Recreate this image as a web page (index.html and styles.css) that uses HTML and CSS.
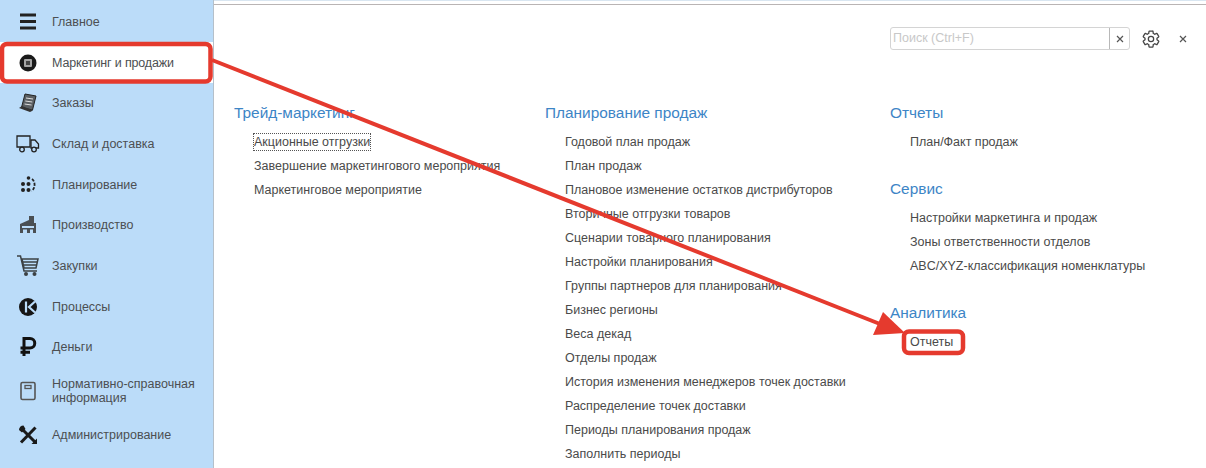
FILE: index.html
```html
<!DOCTYPE html>
<html lang="ru">
<head>
<meta charset="utf-8">
<title>Маркетинг и продажи</title>
<link rel="stylesheet" href="styles.css">
</head>
<body>
<div class="app">
  <nav class="sidebar">
    <div class="nav-item"><svg class="ico" viewBox="0 0 24 24"><path d="M4 3.500h16v3H4zM4 10h16v3H4zM4 16.500h16v3H4z" fill="#222"/></svg><span>Главное</span></div>
    <div class="nav-item active"><svg class="ico" viewBox="0 0 24 24"><circle cx="12" cy="12" r="8.500" fill="#1a1a1a"/><rect x="8" y="8" width="8" height="8" rx="1" fill="#a5a5a5"/><rect x="10" y="10" width="4" height="4" fill="#444"/></svg><span class="tight">Маркетинг и продажи</span></div>
    <div class="nav-item"><svg class="ico" viewBox="0 0 24 24"><path d="M9 3l11 2-3.500 14-11-2.500z" fill="#5a5f63" stroke="#222" stroke-width="1"/><path d="M10 7l7 1M9.300 10l7 1M8.600 13l7 1" stroke="#ddd" stroke-width="1"/><path d="M3 17l3-2 11 4.500-3 1.500z" fill="#333"/></svg><span>Заказы</span></div>
    <div class="nav-item"><svg class="ico ico-wide" viewBox="0 0 24 20"><path d="M1 2h13v11H1z" fill="none" stroke="#222" stroke-width="1.300"/><path d="M15 6h4l3.500 4v4H15z" fill="none" stroke="#222" stroke-width="1.300"/><circle cx="6" cy="15.500" r="2.300" fill="#bbdcf9" stroke="#222" stroke-width="1.300"/><circle cx="18" cy="15.500" r="2.300" fill="#bbdcf9" stroke="#222" stroke-width="1.300"/></svg><span>Склад и доставка</span></div>
    <div class="nav-item"><svg class="ico" viewBox="0 0 24 24"><g fill="#222"><circle cx="7" cy="11" r="2"/><circle cx="12.500" cy="11" r="2"/><circle cx="7" cy="17" r="2"/><circle cx="12.500" cy="17" r="2"/><circle cx="12.500" cy="5" r="1.800"/></g><path d="M16 6c3.500 2.500 3.500 9.500 -.5 12" fill="none" stroke="#222" stroke-width="1.800" stroke-dasharray="3 1.500"/></svg><span>Планирование</span></div>
    <div class="nav-item"><svg class="ico" viewBox="0 0 24 24"><path d="M13 3h5v7h-5z" fill="#4a4f53"/><path d="M4 11l9-4v3h7v10H4z" fill="#4a4f53"/><path d="M6 13h12v2H6z" fill="#bbdcf9"/><path d="M7 16.500h4V20H7zM14 16.500h3V20h-3z" fill="#bbdcf9"/></svg><span>Производство</span></div>
    <div class="nav-item"><svg class="ico ico-cart" viewBox="0 0 24 24"><path d="M1 2h3.500l3.500 15h13" fill="none" stroke="#3c4144" stroke-width="1.500"/><path d="M6 5h16l-2 9H8z" fill="none" stroke="#3c4144" stroke-width="1.500"/><path d="M7 8h14M7.500 11h13" stroke="#3c4144" stroke-width="1.300"/><circle cx="10" cy="20" r="2" fill="#3c4144"/><circle cx="18.500" cy="20" r="2" fill="#3c4144"/></svg><span>Закупки</span></div>
    <div class="nav-item"><svg class="ico" viewBox="0 0 24 24"><circle cx="12" cy="12" r="9" fill="#161616"/><path d="M10 6.500v11M19 6.500l-6 5.500 6 5.500" fill="none" stroke="#bbdcf9" stroke-width="2.200"/></svg><span>Процессы</span></div>
    <div class="nav-item"><svg class="ico" viewBox="0 0 24 24"><path d="M8 21V3.500h6a4.500 4.500 0 0 1 0 9.500H4.500M4.500 17.200H14" fill="none" stroke="#111" stroke-width="3"/></svg><span>Деньги</span></div>
    <div class="nav-item tall"><svg class="ico" viewBox="0 0 24 24"><rect x="5" y="3.500" width="14" height="17" rx="1.500" fill="none" stroke="#555" stroke-width="1.600"/><rect x="9" y="6.500" width="6" height="3" fill="none" stroke="#555" stroke-width="1.300"/></svg><span>Нормативно-справочная информация</span></div>
    <div class="nav-item"><svg class="ico" viewBox="0 0 24 24"><path d="M6 6l13 13" stroke="#1a1a1a" stroke-width="3"/><path d="M19.500 4.500L5 19.500" stroke="#1a1a1a" stroke-width="3"/><path d="M3 7a4.500 4.500 0 0 1 4.500-4.500L9.500 6 6 9.500z" fill="#1a1a1a"/><path d="M21 15.500v5.500h-5.500z" fill="#1a1a1a"/></svg><span>Администрирование</span></div>
  </nav>
  <main class="content">
    <div class="topline"></div>
    <header class="toolbar">
      <div class="search"><span class="search-input">Поиск (Ctrl+F)</span><span class="search-clear"><svg class="x" viewBox="0 0 10 10"><path d="M2 2l6 6M8 2l-6 6"/></svg></span></div>
      <svg class="gear" viewBox="0 0 24 24"><path d="M19.140 12.940c.040-.300.060-.610.060-.940 0-.320-.020-.640-.070-.940l2.030-1.580a.49.490 0 0 0 .120-.610l-1.920-3.320a.488.488 0 0 0-.590-.220l-2.390.960c-.500-.380-1.030-.700-1.620-.940l-.360-2.540a.484.484 0 0 0-.480-.410h-3.840c-.240 0-.430.170-.470.410l-.360 2.540c-.590.240-1.130.570-1.620.940l-2.390-.960c-.220-.080-.470 0-.590.220L2.740 8.870c-.120.210-.080.470.120.610l2.030 1.580c-.050.300-.090.630-.090.940s.020.640.070.940l-2.030 1.580a.49.490 0 0 0-.120.610l1.920 3.320c.120.220.370.290.590.220l2.390-.960c.500.380 1.030.700 1.620.940l.360 2.540c.050.240.240.410.480.410h3.840c.240 0 .440-.170.470-.410l.360-2.540c.590-.240 1.130-.560 1.620-.940l2.390.960c.220.080.470 0 .590-.220l1.920-3.320c.120-.220.070-.470-.120-.610l-2.010-1.580z" fill="none" stroke="#444" stroke-width="1.500"/><circle cx="12" cy="12" r="3.200" fill="none" stroke="#444" stroke-width="1.500"/></svg>
      <svg class="x close" viewBox="0 0 10 10"><path d="M2 2l6 6M8 2l-6 6"/></svg>
    </header>
    <div class="columns">
      <section class="col">
        <div class="group">
          <h2>Трейд-маркетинг</h2>
          <a class="focused">Акционные отгрузки</a>
          <a>Завершение маркетингового мероприятия</a>
          <a>Маркетинговое мероприятие</a>
        </div>
      </section>
      <section class="col">
        <div class="group">
          <h2>Планирование продаж</h2>
          <a>Годовой план продаж</a>
          <a>План продаж</a>
          <a>Плановое изменение остатков дистрибуторов</a>
          <a>Вторичные отгрузки товаров</a>
          <a>Сценарии товарного планирования</a>
          <a>Настройки планирования</a>
          <a>Группы партнеров для планирования</a>
          <a>Бизнес регионы</a>
          <a>Веса декад</a>
          <a>Отделы продаж</a>
          <a>История изменения менеджеров точек доставки</a>
          <a>Распределение точек доставки</a>
          <a>Периоды планирования продаж</a>
          <a>Заполнить периоды</a>
        </div>
      </section>
      <section class="col">
        <div class="group">
          <h2>Отчеты</h2>
          <a>План/Факт продаж</a>
        </div>
        <div class="group">
          <h2>Сервис</h2>
          <a>Настройки маркетинга и продаж</a>
          <a>Зоны ответственности отделов</a>
          <a>ABC/XYZ-классификация номенклатуры</a>
        </div>
        <div class="group">
          <h2>Аналитика</h2>
          <a>Отчеты</a>
        </div>
      </section>
    </div>
  </main>
  <svg class="overlay" viewBox="0 0 1206 468">
    <rect x="2" y="44" width="208.500" height="37.500" rx="5" fill="none" stroke="#e53a2e" stroke-width="4.500"/>
    <rect x="904" y="331.500" width="59" height="21.500" rx="5" fill="none" stroke="#e53a2e" stroke-width="4.500"/>
    <path d="M212 60L880 324" stroke="#e53a2e" stroke-width="4" fill="none"/>
    <path d="M905 333L873 335L883 312z" fill="#e53a2e"/>
  </svg>
</div>
</body>
</html>
```
FILE: styles.css
```css
* { box-sizing: border-box; }
html, body { margin: 0; height: 100%; overflow: hidden; background: #fff; }
body { font-family: "Liberation Sans", Arial, sans-serif; color: #4a4a4a; }
.app { position: relative; display: flex; width: 1206px; height: 468px; overflow: hidden; }
.sidebar { width: 214px; height: 468px; flex: none; padding-top: 1.500px; background: #bbdcf9; border-right: 1px solid #b5c0ca; }
.nav-item { display: flex; align-items: center; height: 40.700px; padding: 0 12px 0 16px; font-size: 12.500px; line-height: 14px; color: #4c4f52; }
.nav-item.tall { height: 47px; }
.nav-item.active { background: #fff; }
.tight { letter-spacing: -0.150px; }
.ico { flex: none; width: 24px; height: 24px; margin-right: 12px; }
.ico-wide { width: 24px; height: 20px; }
.content { flex: 1; display: block; min-width: 0; height: 468px; border-top: 1px solid #d9e6f1; }
.topline { height: 1px; margin-top: 3px; background: #b9b4b4; }
.toolbar { display: flex; align-items: center; height: 23px; margin-top: 22px; padding-left: 676px; }
.search { display: flex; flex: none; width: 240px; height: 23px; border: 1px solid #d4d4d4; border-radius: 3px; background: #fff; }
.search-input { flex: 1; padding-left: 2px; font-size: 12.500px; line-height: 21px; color: #c8c8c8; }
.search-clear { display: flex; align-items: center; justify-content: center; width: 20px; border-left: 1px solid #b8b8b8; }
.x { flex: none; width: 10px; height: 10px; fill: none; stroke: #555; stroke-width: 1.200; }
.gear { flex: none; width: 20px; height: 20px; margin-left: 11px; }
.close { margin-left: 17px; }
.columns { display: grid; grid-template-columns: 311px 345px 1fr; padding-top: 51px; padding-left: 20px; }
.group { display: flex; flex-direction: column; align-items: flex-start; margin-bottom: 23px; }
h2 { margin: 0 0 5px; font-size: 15.400px; font-weight: 400; line-height: 24px; color: #3d85c6; white-space: nowrap; }
.group a { display: block; margin-left: 20px; font-size: 12.500px; line-height: 24px; color: #4a4a4a; white-space: nowrap; }
.group a.focused { height: 18px; margin: 3px 0 3px 19px; padding: 0; line-height: 16px; border: 1px dotted #555; }
.overlay { position: absolute; left: 0; top: 0; width: 1206px; height: 468px; pointer-events: none; }
```
